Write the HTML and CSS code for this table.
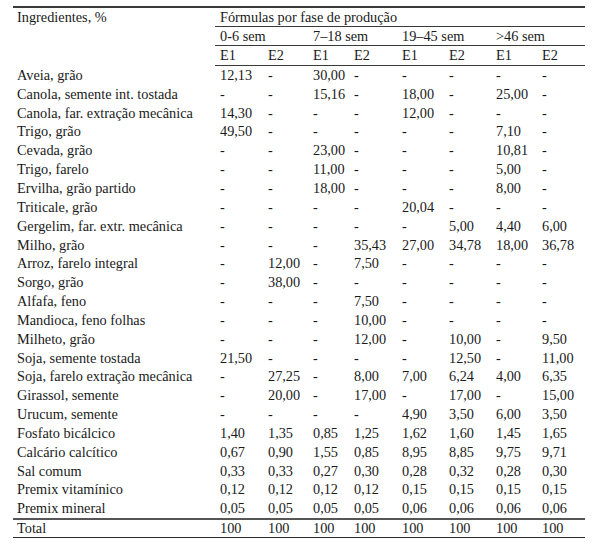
FILE: index.html
```html
<!DOCTYPE html>
<html lang="pt">
<head>
<meta charset="utf-8">
<title>Fórmulas por fase de produção</title>
<link rel="stylesheet" href="styles.css">
</head>
<body>
<table class="tbl">
<colgroup>
<col class="c-name"><col class="c-a"><col class="c-b"><col class="c-c"><col class="c-d"><col class="c-e"><col class="c-f"><col class="c-g"><col class="c-h">
</colgroup>
<thead>
<tr class="h"><th class="name">Ingredientes, %</th><th colspan="8" class="rule">Fórmulas por fase de produção</th></tr>
<tr class="h"><th class="name"></th><th colspan="2" class="rule">0-6 sem</th><th colspan="2" class="rule">7–18 sem</th><th colspan="2" class="rule">19–45 sem</th><th colspan="2" class="rule">&gt;46 sem</th></tr>
<tr class="h h3"><th class="name"></th><th class="rule">E1</th><th class="rule">E2</th><th class="rule">E1</th><th class="rule">E2</th><th class="rule">E1</th><th class="rule">E2</th><th class="rule">E1</th><th class="rule">E2</th></tr>
</thead>
<tbody>
<tr><td class="name">Aveia, grão</td><td>12,13</td><td>-</td><td>30,00</td><td>-</td><td>-</td><td>-</td><td>-</td><td>-</td></tr>
<tr><td class="name">Canola, semente int. tostada</td><td>-</td><td>-</td><td>15,16</td><td>-</td><td>18,00</td><td>-</td><td>25,00</td><td>-</td></tr>
<tr><td class="name">Canola, far. extração mecânica</td><td>14,30</td><td>-</td><td>-</td><td>-</td><td>12,00</td><td>-</td><td>-</td><td>-</td></tr>
<tr><td class="name">Trigo, grão</td><td>49,50</td><td>-</td><td>-</td><td>-</td><td>-</td><td>-</td><td>7,10</td><td>-</td></tr>
<tr><td class="name">Cevada, grão</td><td>-</td><td>-</td><td>23,00</td><td>-</td><td>-</td><td>-</td><td>10,81</td><td>-</td></tr>
<tr><td class="name">Trigo, farelo</td><td>-</td><td>-</td><td>11,00</td><td>-</td><td>-</td><td>-</td><td>5,00</td><td>-</td></tr>
<tr><td class="name">Ervilha, grão partido</td><td>-</td><td>-</td><td>18,00</td><td>-</td><td>-</td><td>-</td><td>8,00</td><td>-</td></tr>
<tr><td class="name">Triticale, grão</td><td>-</td><td>-</td><td>-</td><td>-</td><td>20,04</td><td>-</td><td>-</td><td>-</td></tr>
<tr><td class="name">Gergelim, far. extr. mecânica</td><td>-</td><td>-</td><td>-</td><td>-</td><td>-</td><td>5,00</td><td>4,40</td><td>6,00</td></tr>
<tr><td class="name">Milho, grão</td><td>-</td><td>-</td><td>-</td><td>35,43</td><td>27,00</td><td>34,78</td><td>18,00</td><td>36,78</td></tr>
<tr><td class="name">Arroz, farelo integral</td><td>-</td><td>12,00</td><td>-</td><td>7,50</td><td>-</td><td>-</td><td>-</td><td>-</td></tr>
<tr><td class="name">Sorgo, grão</td><td>-</td><td>38,00</td><td>-</td><td>-</td><td>-</td><td>-</td><td>-</td><td>-</td></tr>
<tr><td class="name">Alfafa, feno</td><td>-</td><td>-</td><td>-</td><td>7,50</td><td>-</td><td>-</td><td>-</td><td>-</td></tr>
<tr><td class="name">Mandioca, feno folhas</td><td>-</td><td>-</td><td>-</td><td>10,00</td><td>-</td><td>-</td><td>-</td><td>-</td></tr>
<tr><td class="name">Milheto, grão</td><td>-</td><td>-</td><td>-</td><td>12,00</td><td>-</td><td>10,00</td><td>-</td><td>9,50</td></tr>
<tr><td class="name">Soja, semente tostada</td><td>21,50</td><td>-</td><td>-</td><td>-</td><td>-</td><td>12,50</td><td>-</td><td>11,00</td></tr>
<tr><td class="name">Soja, farelo extração mecânica</td><td>-</td><td>27,25</td><td>-</td><td>8,00</td><td>7,00</td><td>6,24</td><td>4,00</td><td>6,35</td></tr>
<tr><td class="name">Girassol, semente</td><td>-</td><td>20,00</td><td>-</td><td>17,00</td><td>-</td><td>17,00</td><td>-</td><td>15,00</td></tr>
<tr><td class="name">Urucum, semente</td><td>-</td><td>-</td><td>-</td><td>-</td><td>4,90</td><td>3,50</td><td>6,00</td><td>3,50</td></tr>
<tr><td class="name">Fosfato bicálcico</td><td>1,40</td><td>1,35</td><td>0,85</td><td>1,25</td><td>1,62</td><td>1,60</td><td>1,45</td><td>1,65</td></tr>
<tr><td class="name">Calcário calcítico</td><td>0,67</td><td>0,90</td><td>1,55</td><td>0,85</td><td>8,95</td><td>8,85</td><td>9,75</td><td>9,71</td></tr>
<tr><td class="name">Sal comum</td><td>0,33</td><td>0,33</td><td>0,27</td><td>0,30</td><td>0,28</td><td>0,32</td><td>0,28</td><td>0,30</td></tr>
<tr><td class="name">Premix vitamínico</td><td>0,12</td><td>0,12</td><td>0,12</td><td>0,12</td><td>0,15</td><td>0,15</td><td>0,15</td><td>0,15</td></tr>
<tr><td class="name">Premix mineral</td><td>0,05</td><td>0,05</td><td>0,05</td><td>0,05</td><td>0,06</td><td>0,06</td><td>0,06</td><td>0,06</td></tr>
</tbody>
<tfoot>
<tr class="total"><td class="name">Total</td><td>100</td><td>100</td><td>100</td><td>100</td><td>100</td><td>100</td><td>100</td><td>100</td></tr>
</tfoot>
</table>
</body>
</html>
```
FILE: styles.css
```css
html, body {
  margin: 0;
  padding: 0;
  background: #ffffff;
}

body {
  padding: 6px 0 0 13px;
}

.tbl {
  border-collapse: collapse;
  table-layout: fixed;
  width: 572px;
  font-family: "Liberation Serif", "Times New Roman", serif;
  font-size: 14.3px;
  color: #1a1a1a;
  border-top: 2px solid #3a3a3a;
  border-bottom: 1px solid #2a2a2a;
}

.c-name { width: 202px; }
.c-a { width: 48px; }
.c-b { width: 45px; }
.c-c { width: 41px; }
.c-d { width: 48px; }
.c-e { width: 47px; }
.c-f { width: 47px; }
.c-g { width: 46px; }
.c-h { width: 48px; }

.tbl th,
.tbl td {
  padding: 0 0 0 5px;
  text-align: left;
  font-weight: normal;
  white-space: nowrap;
  vertical-align: middle;
  line-height: 15px;
}

.tbl .name {
  padding-left: 4px;
}

.tbl tr.h th {
  height: 18px;
}

.tbl tr.h3 th {
  height: 19px;
}

.tbl th.rule {
  border-bottom: 1px solid #3a3a3a;
}

.tbl tbody td {
  height: 18.85px;
}

.tbl tr.total td {
  height: 17px;
  border-top: 2px solid #555555;
}
```
